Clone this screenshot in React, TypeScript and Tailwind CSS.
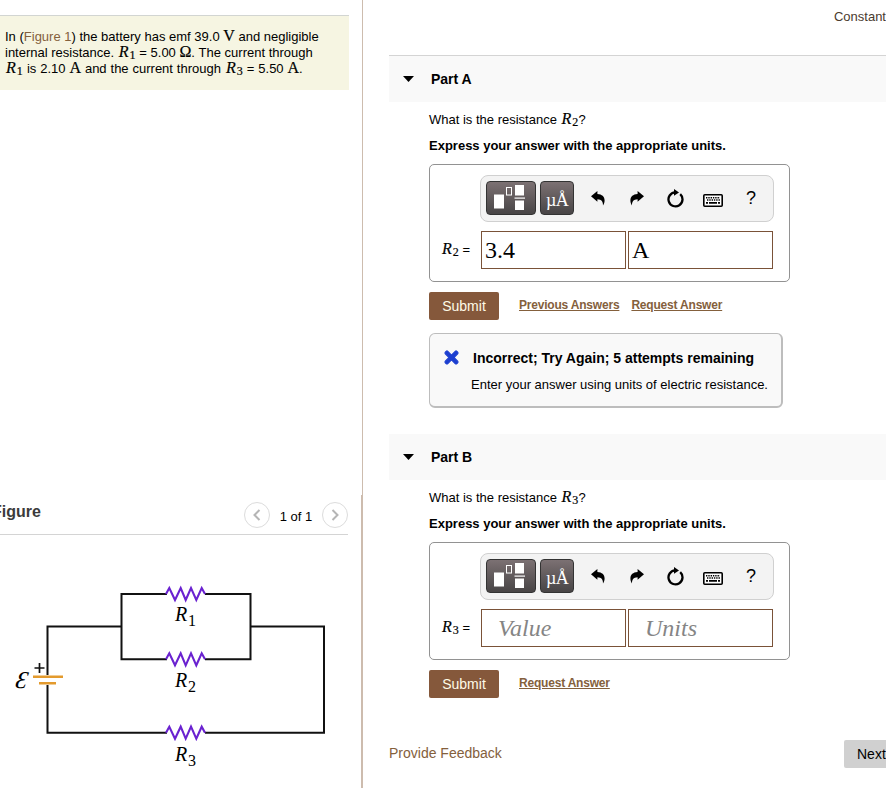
import type { ReactNode } from "react";
import { FaTimes } from "react-icons/fa";

type PartProps = {
  label: string;
  index: string;
  value?: string;
  units?: string;
  hasPrevious?: boolean;
  first?: boolean;
  children?: ReactNode;
};

const MathVar = ({ index }: { index: string }) => (
  <span className="inline-flex h-3 w-[18px] items-baseline pl-px align-baseline font-['Liberation_Serif',serif] text-[16px] leading-3 italic [-webkit-text-stroke:0.2px_currentColor]">
    R<span className="relative top-[2px] ml-px text-[12px] leading-[12px] not-italic">{index}</span>
  </span>
);

const Unit = ({ children }: { children: ReactNode }) => (
  <span className="font-['Liberation_Serif',serif] text-[16px] leading-[12px] [-webkit-text-stroke:0.2px_currentColor]">
    {children}
  </span>
);

const UndoIcon = ({ className = "" }: { className?: string }) => (
  <svg width="14" height="15" viewBox="0 0 14 15" className={className}>
    <path d="M0 5.2 6.4 0v3c4.6.2 7.2 2.7 7.2 6.2 0 2-.5 3.8-1.6 5.3.2-3.8-1.3-6.1-5.6-6.3v2.6z" fill="#000" />
  </svg>
);

const ResetIcon = () => (
  <svg width="18" height="19" viewBox="0 0 18 19">
    <path d="M14.2 5.2A7 7 0 1 1 9 3.4" fill="none" stroke="#000" strokeWidth="2.3" />
    <path d="M8 0l5 3.6-5 3.2z" fill="#000" />
  </svg>
);

const KeyboardIcon = () => (
  <svg width="20" height="13" viewBox="0 0 20 13">
    <rect x=".8" y=".8" width="18.4" height="11.4" rx="1" fill="#fff" stroke="#000" strokeWidth="1.6" />
    <path d="M3 3.7h14M4 6h13" stroke="#000" strokeWidth="1.4" strokeDasharray="1.4 .9" />
    <path d="M3 8.9h2M6 8.9h8M15 8.9h2" stroke="#000" strokeWidth="1.6" />
  </svg>
);

const Toolbar = () => (
  <div className="ml-[50px] flex h-[47px] w-[294px] items-center rounded-lg border border-[#d0d0d0] bg-[#f3f3f3] pl-[5px]">
    <button className="-mt-px h-[34px] w-[50px] rounded-[4px] border border-[#333] bg-linear-to-b from-[#7c7173] to-[#484546]">
      <svg width="48" height="32" viewBox="0 0 48 32">
        <rect x="7" y="12.5" width="10" height="14" fill="#fff" />
        <rect x="19.5" y="5.5" width="5" height="7.5" fill="none" stroke="#fff" />
        <rect x="28" y="3" width="9" height="10.5" fill="#fff" />
        <rect x="27.5" y="15.5" width="10.5" height="1.2" fill="#fff" />
        <rect x="28" y="18.5" width="9" height="9.5" fill="#fff" />
      </svg>
    </button>
    <button className="-mt-px ml-1 h-[34px] w-[34px] rounded-[4px] border border-[#333] bg-linear-to-b from-[#7c7173] to-[#484546] pt-[3px] font-['Liberation_Serif',serif] text-[18px] leading-none tracking-[-0.8px] text-white">
      µÅ
    </button>
    <UndoIcon className="-mt-px ml-[17px]" />
    <UndoIcon className="-mt-px ml-[25px] -scale-x-100" />
    <div className="-mt-px ml-[22px]">
      <ResetIcon />
    </div>
    <div className="mt-[3px] ml-[19px]">
      <KeyboardIcon />
    </div>
    <span className="-mt-px ml-[23px] text-[18px] leading-none">?</span>
  </div>
);

const Field = ({ text, placeholder }: { text?: string; placeholder: string }) => (
  <div className="h-[38px] w-[145px] border border-[#7a5238] bg-white font-['Liberation_Serif',serif] text-[24px] leading-[36px]">
    {text ? (
      <span className="pl-[3px]">{text}</span>
    ) : (
      <span className="pl-4 text-[#858585] italic">{placeholder}</span>
    )}
  </div>
);

const TextLink = ({ children }: { children: ReactNode }) => (
  <a className="text-[12px] font-bold tracking-[-0.2px] text-[#84603c] underline">{children}</a>
);

const Part = ({ label, index, value, units, hasPrevious, first, children }: PartProps) => (
  <section>
    <div className={`flex h-[46px] items-center bg-[#f9f9f9] pl-[14px] ${first ? "border-t border-[#d4d4d4] box-content" : ""}`}>
      <svg width="11" height="6" viewBox="0 0 11 6">
        <path d="M0 0h11L5.5 6z" />
      </svg>
      <h2 className="ml-[17px] text-[14px] font-bold">{label}</h2>
    </div>
    <div className="pl-10">
      <p className="mt-[9px] h-[18px] text-[13px] leading-[18px] whitespace-nowrap">
        What is the resistance <MathVar index={index} />?
      </p>
      <p className="mt-2 h-[18px] text-[13px] leading-[18px] font-bold">Express your answer with the appropriate units.</p>
      <div className="mt-[9px] h-[118px] w-[361px] rounded-[5px] border border-[#929292] pt-[10px]">
        <Toolbar />
        <div className="mt-[9px] flex items-center">
          <div className="w-[51px] pl-[11px] text-[13px] whitespace-nowrap">
            <MathVar index={index} /> =
          </div>
          <div className="flex gap-[2px]">
            <Field text={value} placeholder="Value" />
            <Field text={units} placeholder="Units" />
          </div>
        </div>
      </div>
      <div className="mt-[10px] flex h-7 items-center">
        <button className="h-7 w-[70px] rounded-[2px] bg-[#85583b] text-[14px] text-[#fffbe8]">Submit</button>
        <div className="-mt-[2px] ml-5 flex gap-3">
          {hasPrevious && <TextLink>Previous Answers</TextLink>}
          <TextLink>Request Answer</TextLink>
        </div>
      </div>
      {children}
    </div>
  </section>
);

const ZIGZAG = "l3.3-6 5.7 12 5.7-12 5 12 5.3-12 5.3 12 5.4-12 3.3 6";

const Circuit = () => (
  <svg width="340" height="218" viewBox="0 0 340 218" className="font-['Liberation_Serif',serif]">
    <g fill="none" stroke="#111" strokeWidth="2">
      <path d="M121.5 56.5H47.5V105M47.5 115V162.7H167M205 162.7H324V56.5H250.5" />
      <path d="M167 24H121.5V89.3H167M205 24H250.5V89.3H205" />
      <path d="M34.5 98h10M39.5 93v10" strokeWidth="1.7" />
    </g>
    <g fill="none" stroke="#6a22d0" strokeWidth="2.1">
      <path d={`M166 24${ZIGZAG}`} />
      <path d={`M166 89.3${ZIGZAG}`} />
      <path d={`M166 162.7${ZIGZAG}`} />
    </g>
    <g stroke="#e39a2d" strokeWidth="2.6">
      <path d="M33 106.8h30M39 113.3h17" />
    </g>
    <text transform="translate(14.5 118) skewX(-10)" fontSize="24" fontStyle="italic">Ɛ</text>
    <text x="175" y="51" fontSize="20" fontStyle="italic">R</text>
    <text x="188" y="56" fontSize="16">1</text>
    <text x="175" y="117" fontSize="20" fontStyle="italic">R</text>
    <text x="188" y="122" fontSize="16">2</text>
    <text x="175" y="191" fontSize="20" fontStyle="italic">R</text>
    <text x="188" y="196" fontSize="16">3</text>
  </svg>
);

const PagerButton = ({ d }: { d: string }) => (
  <button className="flex h-[26px] w-[26px] items-center justify-center rounded-full border border-[#dcdcdc]">
    <svg width="8" height="12" viewBox="0 0 8 12">
      <path d={d} fill="none" stroke="#b5b5b5" strokeWidth="2" />
    </svg>
  </button>
);

const App = () => {
  return (
    <div className="flex h-[788px] w-[886px] overflow-hidden bg-white font-['Liberation_Sans',Arial,sans-serif] text-black">
      <aside className="w-[363px] shrink-0">
        {/* Problem statement */}
        <div className="h-[495px] border-r border-[#cdbcae] pt-[15px]">
          <div className="h-[75px] w-[349px] border-t border-[#d2d5d2] bg-[#f6f5e2] pt-[13px] pl-[5px] text-[13px] whitespace-nowrap">
            <p className="h-4 leading-4">
              In (<a className="text-[#84603c]">Figure 1</a>) the battery has emf 39.0 <Unit>V</Unit> and negligible
            </p>
            <p className="h-4 leading-4">
              internal resistance. <MathVar index="1" /> = 5.00 <Unit>Ω</Unit>. The current through
            </p>
            <p className="h-4 leading-4 [word-spacing:0.3px]">
              <MathVar index="1" /> is 2.10 <Unit>A</Unit> and the current through <MathVar index="3" /> = 5.50 <Unit>A</Unit>.
            </p>
          </div>
        </div>
        {/* Figure panel */}
        <div className="h-[293px] overflow-hidden border-r-2 border-[#cdbcae]">
          <div className="flex h-10 w-[348px] items-center border-b border-[#d4d4d4]">
            <h3 className="-mt-[5px] -ml-2 flex-1 text-[16px] font-bold text-[#3b3b3b]">Figure</h3>
            <PagerButton d="M6.5 1 1.5 6l5 5" />
            <span className="mt-1 w-[52px] text-center text-[13px]">1 of 1</span>
            <PagerButton d="M1.5 1l5 5-5 5" />
          </div>
          <div className="pt-[35px]">
            <Circuit />
          </div>
        </div>
      </aside>

      <main className="min-w-0 flex-1 pl-[26px]">
        <div className="flex h-[55px] justify-end pt-2 text-[13px] leading-[18px] text-[#4a3a2e]">
          <span>Constant</span>
        </div>
        <Part label="Part A" index="2" value="3.4" units="A" hasPrevious first>
          <div className="mt-[13px] flex h-[75px] w-[354px] rounded-[6px] border border-r-2 border-b-2 border-[#bdbdbd] bg-[#f9f9f9] pl-[13px]">
            <FaTimes className="mt-[14px] h-[19px] w-[17px] stroke-[#1d3fd0] stroke-[30px] text-[#1d3fd0]" />
            <div className="pl-[11px] whitespace-nowrap">
              <p className="mt-[15px] pl-[2px] text-[14px] leading-[18px] font-bold">
                Incorrect; Try Again; 5 attempts remaining
              </p>
              <p className="mt-[9px] text-[13px] leading-[18px]">Enter your answer using units of electric resistance.</p>
            </div>
          </div>
        </Part>
        <div className="mt-[26px]">
          <Part label="Part B" index="3" />
        </div>
        <div className="mt-[42px] flex h-7 items-center justify-between">
          <a className="-mt-[2px] text-[14px] text-[#84603c]">Provide Feedback</a>
          <button className="h-7 w-[42px] rounded-l-[2px] bg-[#d0d0d0] pl-[13px] text-left text-[14px]">Next</button>
        </div>
      </main>
    </div>
  );
};

export default App;
